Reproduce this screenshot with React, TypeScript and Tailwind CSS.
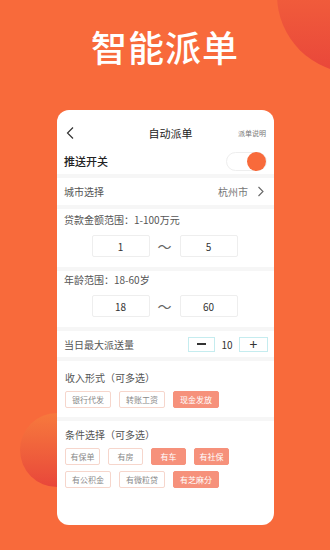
import React from 'react';

const font = { fontFamily: '"Noto Sans CJK SC", "Noto Sans", sans-serif' };

const Divider = () => <div className="h-[4px] bg-[#f6f6f6]" />;

const Tag = ({ label, on }: { label: string; on?: boolean }) => (
  <div
    className={
      (label.length > 3 ? 'w-[46px] ' : 'w-[35px] ') +
      (on
        ? 'h-[17px] flex items-center justify-center rounded-[2px] bg-[#f6917b] text-white text-[8px] border border-[#f6917b]'
        : 'h-[17px] flex items-center justify-center rounded-[2px] bg-white text-[#888] text-[8px] border border-[#f6d6cc]')
    }
  >
    {label}
  </div>
);

const RangeRow = ({ a, b }: { a: string; b: string }) => (
  <div className="flex items-center justify-center gap-[5px] mt-[8px] pr-[2px]">
    <div className="w-[58px] h-[22px] border border-[#eeeeee] rounded-[2px] flex items-center justify-center text-[10px] text-[#333]">{a}</div>
    <span className="w-[20px] text-center text-[14px] text-[#666] leading-none">～</span>
    <div className="w-[58px] h-[22px] border border-[#eeeeee] rounded-[2px] flex items-center justify-center text-[10px] text-[#333]">{b}</div>
  </div>
);

export default function App() {
  return (
    <div className="relative w-[330px] h-[550px] overflow-hidden bg-[#f86a3b]" style={font}>
      {/* decorative circles */}
      <div className="absolute left-[277px] top-[-83px] w-[156px] h-[156px] rounded-full bg-gradient-to-b from-[#f8703c] to-[#e9463a]" />
      <div className="absolute left-[20px] top-[413px] w-[74px] h-[74px] rounded-full bg-gradient-to-b from-[#f7793d] to-[#e8463a]" />

      <div className="relative flex flex-col">
        <h1 className="h-[92px] pt-[20px] text-center text-white text-[36px] font-medium leading-[52px] tracking-[1px]">智能派单</h1>

        <div className="mx-[57px] mt-[18px] w-[217px] h-[415px] bg-white rounded-[12px] flex flex-col">
          {/* header */}
          <div className="h-[38px] pt-[8px] px-[8px] flex items-center justify-between">
            <svg width="12" height="14" viewBox="0 0 12 14" fill="none" stroke="#333" strokeWidth="1.2">
              <path d="M8 1.5 L2.5 7 L8 12.5" />
            </svg>
            <span className="text-[11px] text-[#222] ml-[26px]">自动派单</span>
            <span className="text-[7px] text-[#777]">派单说明</span>
          </div>

          {/* switch */}
          <div className="h-[26px] px-[7px] flex items-center justify-between">
            <span className="text-[11px] font-medium text-[#222]">推送开关</span>
            <div className="w-[41px] h-[19px] rounded-full border border-[#eeeeee] flex items-center justify-end">
              <div className="w-[19px] h-[19px] rounded-full bg-[#f86a3b]" />
            </div>
          </div>
          <Divider />

          {/* city */}
          <div className="h-[27px] pl-[7px] pr-[10px] flex items-center justify-between">
            <span className="text-[10px] text-[#555]">城市选择</span>
            <div className="flex items-center gap-[9px]">
              <span className="text-[10px] text-[#777]">杭州市</span>
              <svg width="7" height="11" viewBox="0 0 7 11" fill="none" stroke="#666" strokeWidth="1.1">
                <path d="M1.5 1 L6 5.5 L1.5 10" />
              </svg>
            </div>
          </div>
          <Divider />

          {/* loan */}
          <div className="h-[58px] px-[7px] pt-[4px]">
            <div className="text-[10px] text-[#555] leading-[14px]">贷款金额范围：1-100万元</div>
            <RangeRow a="1" b="5" />
          </div>
          <Divider />

          {/* age */}
          <div className="h-[56px] px-[7px] pt-[2px]">
            <div className="text-[10px] text-[#555] leading-[14px]">年龄范围：18-60岁</div>
            <RangeRow a="18" b="60" />
          </div>
          <Divider />

          {/* max count */}
          <div className="h-[26px] pl-[7px] pr-[6px] flex items-center justify-between">
            <span className="text-[10px] text-[#555]">当日最大派送量</span>
            <div className="flex items-center">
              <div className="w-[27px] h-[15px] border border-[#c5ecef] flex items-center justify-center">
                <div className="w-[9px] h-[1.5px] bg-[#333]" />
              </div>
              <span className="w-[24px] text-center text-[10px] text-[#333]">10</span>
              <div className="w-[29px] h-[15px] border border-[#c5ecef] flex items-center justify-center text-[14px] leading-none text-[#333]">+</div>
            </div>
          </div>
          <Divider />

          {/* income */}
          <div className="h-[56px] px-[8px] pt-[10px]">
            <div className="text-[10px] text-[#555] leading-[14px]">收入形式（可多选）</div>
            <div className="flex gap-[8px] mt-[6px]">
              <Tag label="银行代发" />
              <Tag label="转账工资" />
              <Tag label="现金发放" on />
            </div>
          </div>
          <Divider />

          {/* conditions */}
          <div className="px-[8px] pt-[7px]">
            <div className="text-[10px] text-[#555] leading-[14px]">条件选择（可多选）</div>
            <div className="flex gap-[8px] mt-[6px]">
              <Tag label="有保单" />
              <Tag label="有房" />
              <Tag label="有车" on />
              <Tag label="有社保" on />
            </div>
            <div className="flex gap-[8px] mt-[6px]">
              <Tag label="有公积金" />
              <Tag label="有微粒贷" />
              <Tag label="有芝麻分" on />
            </div>
          </div>
        </div>
      </div>
    </div>
  );
}
